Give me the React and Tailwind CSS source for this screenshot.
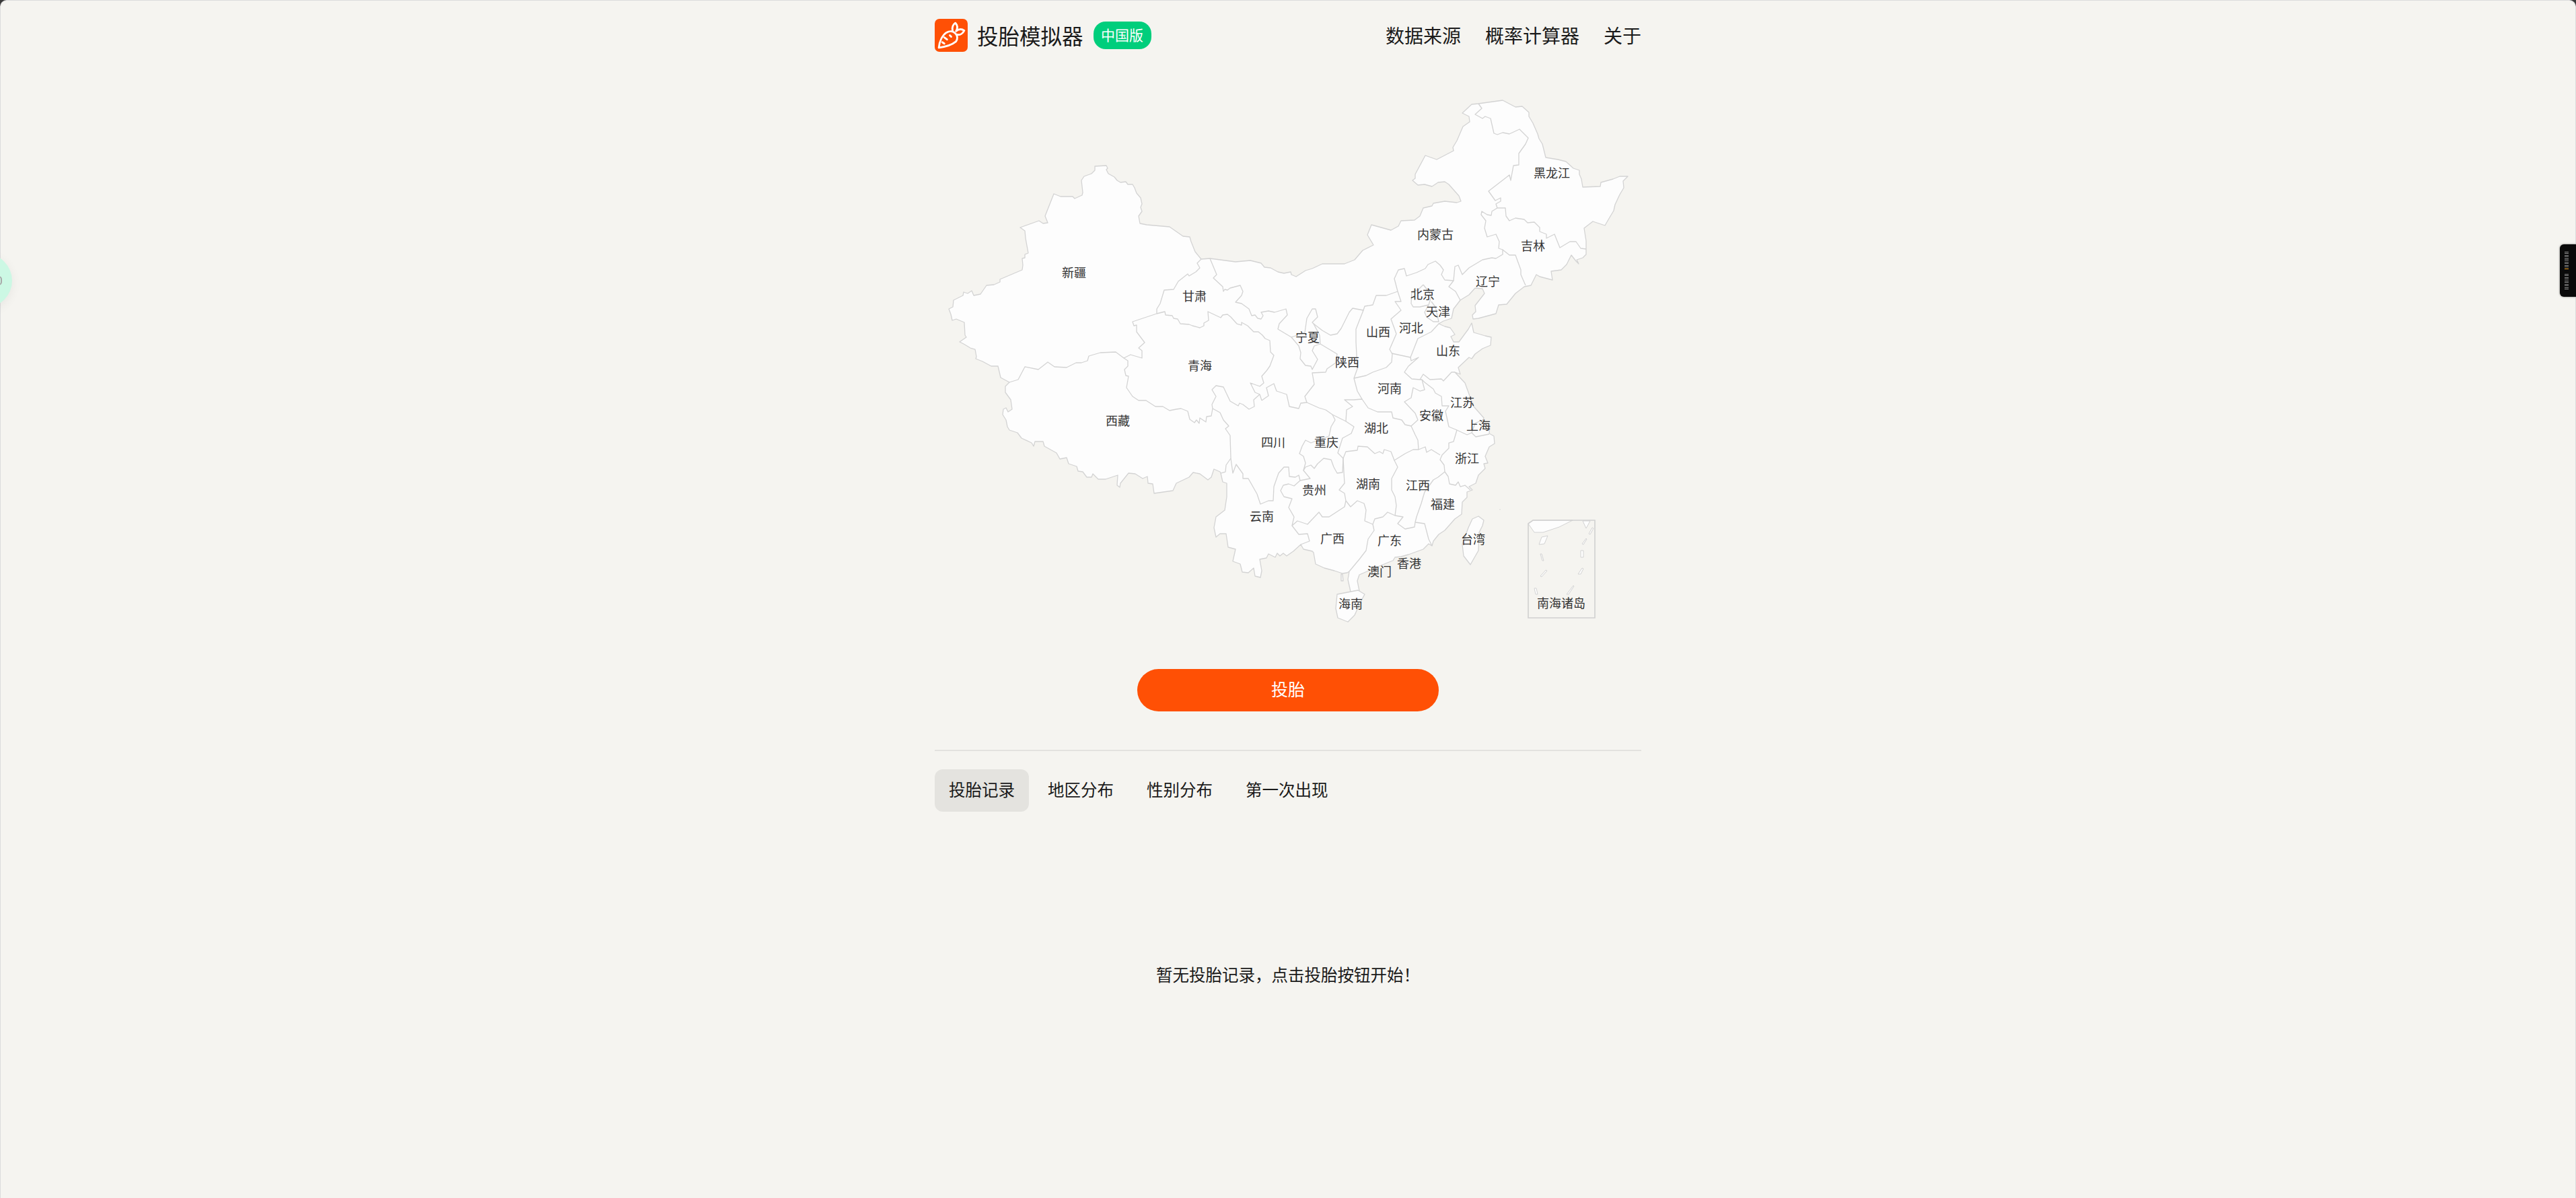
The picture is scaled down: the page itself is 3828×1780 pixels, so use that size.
const outline = `1785,384 1798,383 1836,388 1858,386 1874,390 1879,396 1888,397 1899,403 1908,405 1918,403 1919,407 1926,410 1940,401 1950,398 1965,391 1998,391 2013,385 2025,371 2041,363 2032,348 2038,333 2067,341 2078,335 2082,327 2102,326 2110,320 2115,308 2128,305 2130,301 2147,298 2165,300 2171,298 2168,290 2153,273 2147,269 2137,270 2128,276 2117,273 2107,274 2099,267 2103,264 2103,258 2118,230 2135,236 2160,223 2159,218 2165,208 2174,187 2184,180 2183,172 2173,167 2187,154 2197,153 2233,148 2252,158 2262,157 2272,166 2272,172 2278,182 2285,198 2287,205 2292,213 2295,225 2297,233 2315,236 2327,239 2338,249 2347,252 2347,258 2350,265 2352,277 2378,276 2379,270 2397,265 2407,261 2419,261 2412,268 2413,278 2407,288 2400,303 2398,312 2392,322 2385,334 2367,328 2354,338 2357,357 2357,377 2352,382 2343,385 2346,391 2342,387 2335,378 2328,392 2320,400 2305,402 2307,415 2288,410 2283,407 2275,423 2265,425 2252,435 2239,451 2227,452 2223,465 2197,472 2189,473 2188,467 2193,462 2192,453 2206,435 2203,428 2192,427 2183,437 2170,445 2160,458 2157,472 2145,476 2138,480 2147,484 2155,486 2162,496 2156,499 2160,507 2168,507 2182,488 2187,479 2190,493 2207,498 2216,500 2215,512 2203,517 2192,525 2187,532 2183,530 2167,545 2170,555 2162,552 2177,568 2185,590 2190,603 2205,620 2202,628 2214,633 2213,643 2220,647 2221,658 2213,663 2207,677 2211,687 2205,688 2207,695 2197,705 2193,717 2183,722 2188,727 2180,730 2180,738 2173,745 2172,763 2162,770 2147,787 2138,793 2130,803 2128,810 2123,807 2115,815 2093,823 2082,826 2073,827 2070,832 2067,833 2045,842 2020,853 2017,862 2020,877 2007,878 2003,860 2005,848 2002,850 1995,851 1983,847 1968,843 1955,837 1952,820 1950,818 1937,815 1933,808 1922,818 1912,825 1907,821 1902,825 1898,821 1895,827 1885,822 1882,828 1872,830 1875,847 1873,857 1865,855 1863,843 1855,850 1846,849 1843,837 1832,833 1836,815 1825,812 1822,792 1813,792 1807,797 1804,783 1807,767 1820,757 1823,737 1823,717 1817,715 1814,702 1813,700 1804,696 1800,708 1795,712 1783,703 1773,701 1767,708 1748,717 1743,728 1715,732 1713,718 1706,717 1705,707 1698,710 1687,703 1677,702 1665,717 1664,723 1660,720 1661,705 1643,711 1632,711 1624,703 1622,708 1615,708 1609,700 1602,699 1600,692 1588,688 1585,679 1575,681 1570,672 1552,662 1550,655 1538,655 1536,662 1533,657 1518,650 1512,642 1500,638 1497,633 1495,623 1490,615 1491,607 1495,605 1498,611 1504,607 1502,593 1494,582 1494,573 1500,567 1487,560 1483,543 1473,543 1460,536 1450,532 1451,529 1449,518 1442,516 1432,510 1426,507 1436,500 1434,497 1433,478 1421,473 1415,475 1413,466 1410,458 1416,455 1417,445 1431,438 1432,433 1438,435 1444,431 1447,438 1457,436 1466,423 1477,422 1486,418 1486,414 1519,400 1520,393 1519,383 1523,382 1523,377 1528,375 1524,353 1523,342 1516,337 1544,327 1550,331 1557,330 1553,320 1566,287 1576,291 1594,291 1597,294 1608,289 1609,285 1607,267 1611,261 1622,257 1627,252 1627,246 1644,245 1646,249 1644,251 1647,257 1656,262 1660,267 1665,270 1673,269 1676,273 1683,273 1686,278 1689,286 1695,293 1697,302 1695,307 1697,313 1692,320 1694,331 1704,333 1738,336 1758,350 1768,351 1770,358 1776,373`

const hainan = '1987,882 2018,876 2028,882 2022,893 2013,913 2003,923 1988,917 1985,903'
const taiwan = '2197,766 2205,772 2203,780 2198,790 2197,817 2185,838 2175,825 2173,808 2182,783 2188,770'

// province borders, every shared edge is drawn once
const borders = [
  // xinjiang east, then tibet north
  '1785,384 1779,390 1783,397 1777,403 1767,409 1765,406 1751,417 1744,429 1730,430 1724,450 1719,458 1719,465 1683,477 1685,483 1689,482 1689,492 1701,508 1692,516 1697,520 1697,531 1680,526 1670,531 1658,522 1635,523 1618,528 1616,535 1607,538 1599,538 1585,545 1567,544 1557,537 1543,548 1523,544 1513,563 1500,567',
  // qinghai / tibet
  '1670,531 1676,535 1676,543 1671,548 1673,557 1677,558 1674,575 1683,588 1692,594 1703,594 1717,603 1728,603 1738,609 1748,607 1755,606 1765,610 1768,622 1775,627 1778,623 1782,628 1783,620 1792,626 1793,618 1800,617 1802,606',
  // tibet / sichuan / yunnan
  '1802,606 1813,612 1818,623 1826,632 1821,636 1828,646 1829,680 1822,690 1821,700 1814,702',
  '1829,680 1832,702 1837,689 1847,703 1847,710 1855,710 1868,733 1873,748 1885,743 1892,743 1893,722 1900,702 1908,693 1915,693 1916,707 1925,708 1930,705 1932,713 1947,710 1937,698 1940,693 1948,690 1953,695 1958,688 1967,680 1978,682 1982,693 1987,702 1995,701 1996,680',
  // qinghai / gansu
  '1719,465 1731,462 1732,467 1742,468 1744,472 1750,473 1754,480 1767,481 1772,483 1783,486 1789,483 1789,479 1796,475 1795,462 1814,471 1817,467 1824,466 1829,470 1838,480 1845,482 1845,478 1854,483 1863,492 1870,492 1876,497 1880,502 1887,505 1888,522 1893,527 1887,543 1882,550 1875,558 1878,568 1872,573 1858,568 1865,582 1872,585 1875,594',
  // qinghai / sichuan
  '1802,606 1801,600 1807,588 1801,578 1807,572 1818,574 1828,595 1840,602 1842,598 1847,600 1856,607 1864,603 1863,593 1872,585',
  // gansu / sichuan / shaanxi
  '1875,594 1885,587 1882,575 1893,569 1897,580 1912,585 1916,603 1930,606 1933,598 1942,597 1939,588 1953,570 1950,553 1970,552 1972,547 1985,538 1987,525 1962,510 1961,497 1952,480 1950,478 1958,470 1955,458 1950,458 1942,472 1939,493 1925,498 1919,500',
  // gansu / inner mongolia
  '1798,383 1808,407 1803,412 1817,425 1818,432 1820,429 1824,430 1828,427 1843,423 1847,432 1845,438 1836,448 1845,450 1856,458 1860,468 1865,467 1869,472 1874,473 1877,468 1874,463 1885,461 1894,463 1911,458 1913,467 1901,480 1899,488 1919,500 1930,513 1933,523 1932,532 1940,542 1948,543 1950,548 1958,533 1950,520 1953,513 1962,510',
  // shaanxi / inner mongolia / shanxi
  '1952,480 1965,490 1977,497 1987,495 1993,487 2005,463 2010,457 2026,460 2028,454 2040,452 2045,438 2060,438 2077,432',
  '2026,460 2015,488 2015,507 2017,547 2012,561 2017,580 2024,592',
  // shaanxi / sichuan / chongqing / hubei
  '1942,597 1960,605 1970,608 1980,615 2000,625 2001,608 2010,603 1998,593 2012,593 2024,592 2033,605 2047,611 2068,611 2070,620 2083,623 2088,630 2097,632',
  '1980,615 1984,623 1978,633 1975,647 1948,657 1940,653 1935,662 1931,673 1937,677 1940,687 1937,698',
  '2000,625 2012,633 2008,643 1995,650 1988,672 1996,680 2000,670 2017,668 2018,662 2032,663 2043,673 2050,670 2055,673 2057,667 2067,670 2072,683 2088,673 2100,667 2108,667 2107,653 2103,645 2097,632 2107,623 2103,613 2087,596 2097,590 2100,575 2110,580 2117,578 2113,563 2110,563',
  // shanxi / hebei / henan
  '2077,432 2082,447 2073,447 2082,460 2067,473 2075,495 2065,518 2069,525 2068,537 2060,545 2040,552 2030,557 2012,561',
  '2068,524 2096,530 2097,535 2108,530 2093,543 2087,552 2098,562 2110,563 2115,555 2125,563 2142,562 2145,565 2157,552 2162,552',
  '2096,530 2107,502 2127,492 2138,480',
  // hebei north edge
  '2077,432 2072,413 2078,400 2087,398 2090,409 2105,404 2118,398 2122,392 2133,387 2140,393 2145,400 2142,407 2147,415 2160,416 2153,425 2163,432 2170,445',
  '2160,416 2162,395 2167,393 2173,407 2183,397 2203,385 2217,382 2223,383 2233,377 2233,370 2243,378 2252,378 2260,400 2260,407 2267,423',
  // beijing, tianjin
  '2115,422 2123,432 2127,440 2123,452 2110,455 2100,455 2097,450 2098,432 2107,430 2115,422',
  '2127,447 2133,455 2138,477 2130,477 2120,470 2117,463 2123,452',
  // jilin / heilongjiang / inner mongolia
  '2233,370 2227,368 2228,358 2223,347 2210,351 2206,338 2208,327 2201,318 2202,313 2210,318 2216,319 2217,313 2225,308 2237,308 2238,320 2243,327 2252,323 2265,325 2270,330 2280,329 2288,337 2288,343 2298,347 2298,353 2310,347 2318,367 2333,358 2342,358 2349,368 2357,369',
  '2225,308 2223,302 2230,298 2230,293 2222,297 2212,283 2243,259 2245,267 2249,245 2257,244 2257,227 2267,213 2271,204 2258,191 2243,198 2233,196 2225,199 2220,197 2215,175 2207,172 2203,175 2192,169 2202,160 2197,153',
  // jiangsu / anhui / shanghai / zhejiang
  '2113,563 2117,567 2130,577 2133,583 2142,588 2143,602 2153,602 2148,610 2153,633 2165,638 2180,645 2187,642 2193,648 2213,644',
  '2187,642 2192,628 2205,622',
  '2165,638 2160,655 2153,657 2153,665 2143,675 2140,682 2146,690 2147,700 2152,707 2154,718 2163,720 2167,715 2170,722 2177,720 2185,727',
  '2108,667 2118,663 2120,671 2127,667 2140,675',
  // jiangxi / fujian / guangdong / hunan
  '2147,700 2137,708 2130,712 2117,730 2112,747 2105,767 2103,775 2102,782 2088,785 2077,777 2085,767 2073,765 2062,760 2055,767 2043,770 2040,778 2028,773 2030,757 2027,747 2017,743 2007,752 2000,743 1998,732 1990,727 1998,717 1997,700 1996,680',
  '2072,683 2077,693 2068,710 2068,727 2073,737 2075,750 2073,765',
  '2103,775 2117,777 2123,800 2128,810',
  // guizhou / guangxi / yunnan
  '2000,743 1998,752 1975,767 1965,767 1960,760 1943,778 1928,773 1920,780 1923,767 1915,753 1920,740 1908,737 1903,728 1907,720 1915,718 1923,721 1932,713',
  '1920,780 1930,793 1943,792 1946,803 1933,808',
  '2040,778 2042,787 2033,800 2030,817 2020,830 2005,848',
]

// nine dash islands in the inset
const islands = [
  '2291,797 2300,795 2295,807 2287,808',
  '2361,792 2366,783 2368,784 2363,793',
  '2351,807 2357,799 2358,800 2353,808',
  '2349,817 2353,817 2353,827 2349,827',
  '2289,822 2291,822 2294,832 2292,832',
  '2289,855 2297,846 2299,847 2291,856',
  '2345,852 2351,843 2353,844 2349,852',
  '2280,873 2283,873 2285,882 2282,882',
  '2328,882 2338,869 2339,870 2331,882',
]

const labels = [
  ['新疆', 1596, 403], ['甘肃', 1775, 438], ['内蒙古', 2133, 346], ['黑龙江', 2306, 255],
  ['吉林', 2278, 363], ['辽宁', 2211, 416], ['北京', 2114, 435], ['天津', 2137, 461],
  ['河北', 2097, 485], ['山西', 2048, 491], ['山东', 2152, 519], ['宁夏', 1943, 499],
  ['陕西', 2002, 536], ['河南', 2065, 575], ['江苏', 2173, 596], ['安徽', 2127, 615],
  ['上海', 2197, 630], ['湖北', 2045, 634], ['重庆', 1971, 655], ['浙江', 2180, 679],
  ['湖南', 2033, 717], ['江西', 2107, 719], ['贵州', 1953, 726], ['福建', 2144, 747],
  ['广西', 1980, 798], ['广东', 2065, 801], ['台湾', 2189, 799], ['香港', 2094, 835],
  ['澳门', 2050, 847], ['海南', 2007, 895], ['南海诸岛', 2320, 894], ['青海', 1783, 541],
  ['西藏', 1661, 623], ['四川', 1892, 655], ['云南', 1875, 765],
]

const tabs = ['投胎记录', '地区分布', '性别分布', '第一次出现']
const navLinks = ['数据来源', '概率计算器', '关于']

function CarrotLogo() {
  return (
    <svg viewBox="0 0 48 48" className="h-[49px] w-[49px] shrink-0 rounded-[7px] bg-[#ff5005]" fill="none" stroke="#fff" strokeWidth="2.8" strokeLinecap="round" strokeLinejoin="round">
      <path d="M6 42 C7 33 11 24 17 20 C22 17 27 18 30 21 C33 24 34 29 31 33 C25 38 14 41 6 42 Z" />
      <path d="M26 17 C25 12 27 8 30 6 C33 9 34 13 31 18 C36 14 40 15 43 17 C41 21 37 24 33 23" />
      <path d="M14 27 L18 30 M11 34 L14 36 M22 24 L24 26" />
    </svg>
  )
}

function ChinaMap() {
  return (
    <svg viewBox="1389 100 1050 860" className="block h-[860px] w-[1050px]">
      <g fill="#fdfdfd" stroke="#d3d3d3" strokeWidth="1.3" strokeLinejoin="round">
        <polygon points={outline} />
        <polygon points={hainan} />
        <polygon points={taiwan} />
        <polygon points="1993,852 1995,852 1996,862 1993,862" />
      </g>
      <g fill="none" stroke="#d3d3d3" strokeWidth="1.3" strokeLinejoin="round">
        {borders.map((b, i) => <polyline key={i} points={b} />)}
      </g>
      {/* inset */}
      <g fill="#fdfdfd" stroke="#d3d3d3" strokeWidth="1">
        <polygon points="2271,777 2278,772 2337,772 2317,782 2293,790 2280,790" />
        <polygon points="2352,773 2363,773 2357,784" />
        {islands.map((p, i) => <polygon key={i} points={p} />)}
      </g>
      <polygon points="2271,777 2278,772 2370,772 2370,917 2271,917" fill="none" stroke="#d0d0d0" strokeWidth="1.6" />
      <circle cx="2229" cy="756" r="0.7" fill="#d3d3d3" />
      <g fill="#333" fontSize="18" textAnchor="middle" dominantBaseline="central">
        {labels.map(([name, x, y]) => <text key={name} x={x} y={y}>{name}</text>)}
      </g>
    </svg>
  )
}

export default function App() {
  return (
    <div className="relative h-[1780px] w-full overflow-hidden bg-[#3a3a3a] font-['Noto_Sans_CJK_SC',sans-serif] text-[#1a1a1a]">
      <div className="h-full rounded-t-[10px] border-x border-t border-[#dcdcdc] bg-[#f5f4f0]">
        <div className="mx-auto w-[1050px]">
          <header className="flex items-center justify-between pt-[27px]">
            <div className="flex items-center">
              <CarrotLogo />
              <span className="ml-[14px] text-[31.5px] leading-[49px]">投胎模拟器</span>
              <span className="ml-[15px] flex h-[41px] w-[86px] items-center justify-center rounded-[18px] bg-[#00ce7c] pb-[1px] text-[21px] text-white">中国版</span>
            </div>
            <nav className="flex gap-[36px] text-[28px] leading-[49px]">
              {navLinks.map((n) => <span key={n}>{n}</span>)}
            </nav>
          </header>

          <div className="mt-[24px]">
            <ChinaMap />
          </div>

          <button className="mx-auto mt-[33px] flex h-[63px] w-[448px] items-center justify-center rounded-full bg-[#ff5005] pb-[3px] text-[25px] text-white">投胎</button>

          <div className="mt-[57px] h-[2px] bg-[#e3e2df]" />

          <div className="mt-[27px] flex gap-[7px]">
            {tabs.map((t, i) => (
              <span key={t} className={i === 0 ? 'flex h-[63px] items-center rounded-[12px] bg-[#e4e3df] px-[21px] pb-[3px] text-[24.5px]' : 'flex h-[63px] items-center rounded-[12px] px-[21px] pb-[3px] text-[24.5px]'}>{t}</span>
            ))}
          </div>

          <div className="flex h-[488px] items-center justify-center pb-[3px] text-[24.5px]">暂无投胎记录，点击投胎按钮开始！</div>
        </div>
      </div>

      {/* browser extension widgets sitting on the page edges */}
      <div className="absolute left-[-62px] top-[377px] flex h-[80px] w-[80px] items-center justify-end rounded-full bg-[#ccf8e4] pr-[15px] shadow-[0_4px_16px_rgba(0,0,0,0.06)]">
        <span className="h-[14px] w-[10px] rounded-full border-2 border-[#a9a9a9]" />
      </div>
      <div className="absolute right-0 top-[363px] flex h-[78px] w-[24px] flex-col items-center justify-center gap-[7px] rounded-l-[6px] bg-[#0a0a0a] pr-[4px] shadow-[0_0_3px_rgba(0,0,0,0.5)]">
        <div className="flex flex-col gap-[1.5px]">
          {[0, 1, 2, 3, 4, 5, 6, 7, 8, 9].map((n) => <span key={n} className="block h-[1px] w-[6px] bg-[#8a8a8a]" />)}
          <span className="block h-[1px] w-[6px] bg-[#f5a623]" />
        </div>
        <div className="flex flex-col gap-[1.5px]">
          {[0, 1, 2, 3, 4, 5, 6, 7, 8, 9].map((n) => <span key={n} className="block h-[1px] w-[6px] bg-[#8a8a8a]" />)}
        </div>
      </div>
    </div>
  )
}
